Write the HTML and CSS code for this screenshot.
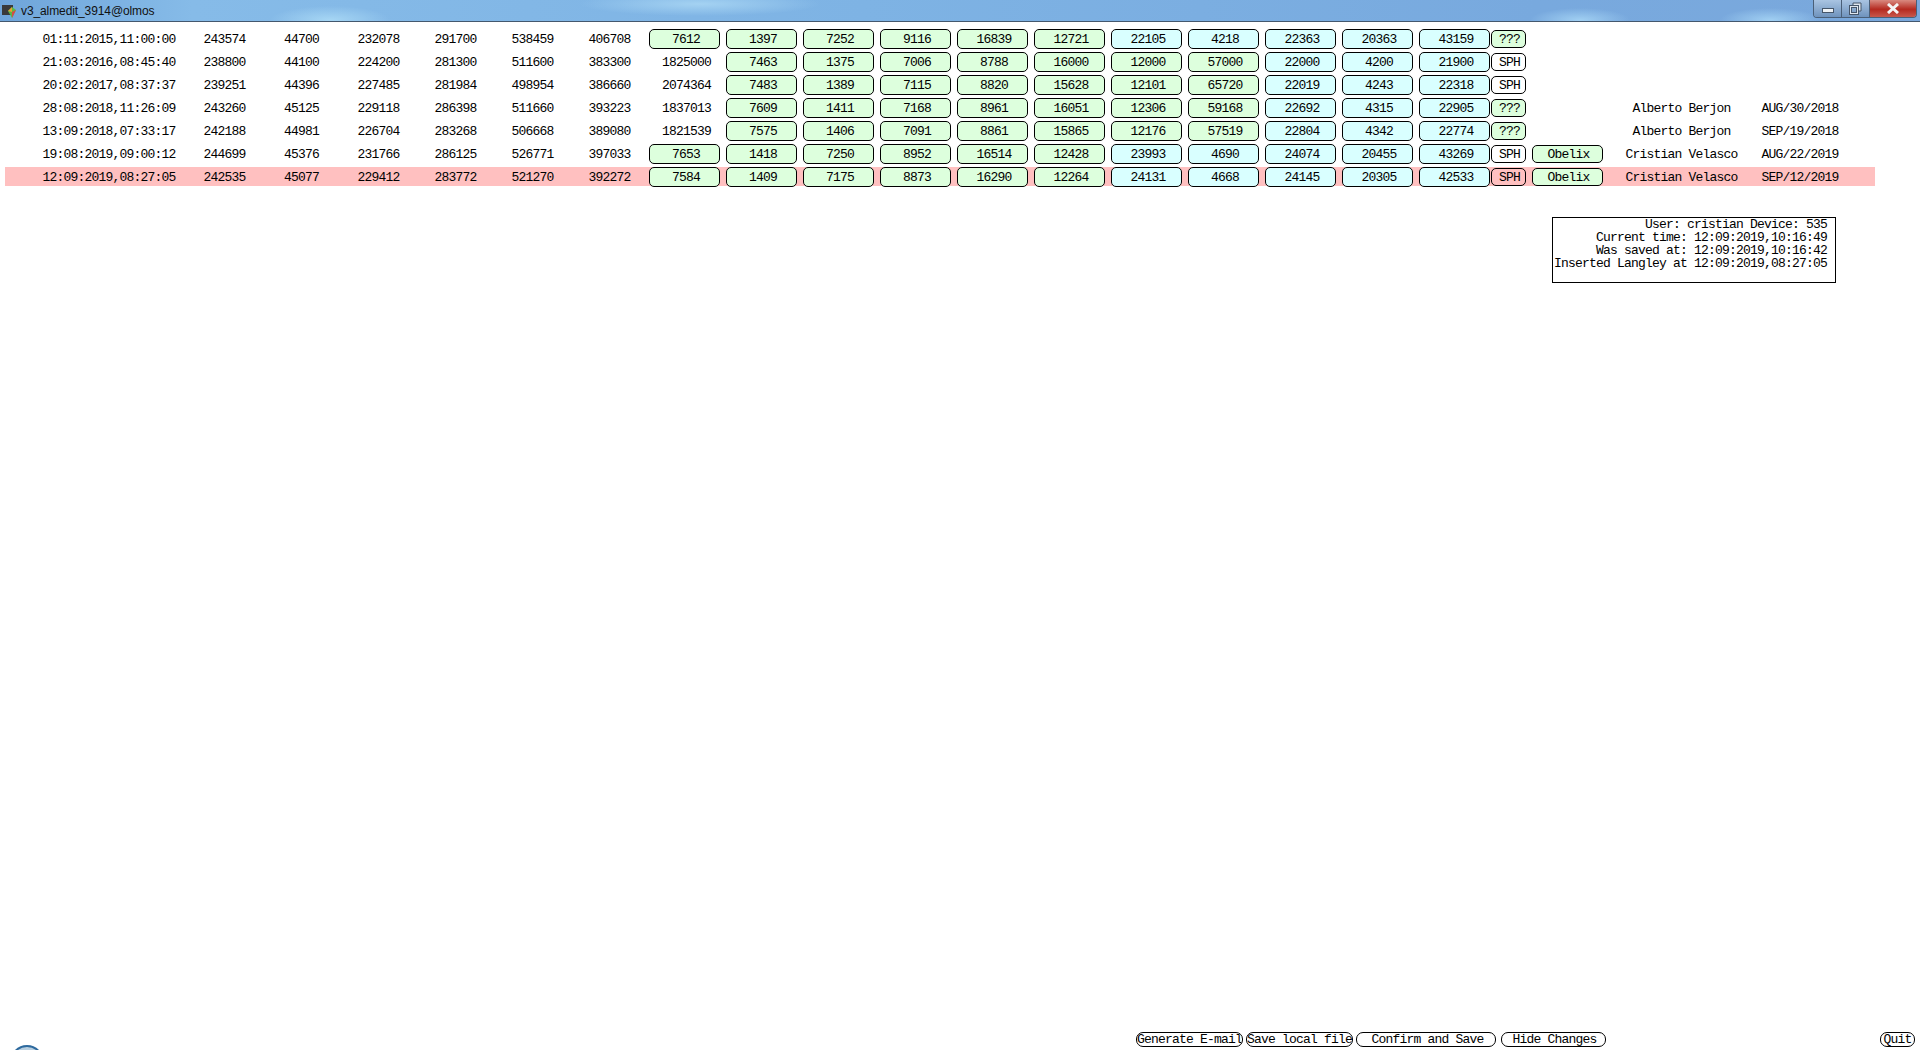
FILE: index.html
```html
<!DOCTYPE html>
<html lang="en">
<head>
    <meta charset="UTF-8">
    <title>v3_almedit_3914@olmos</title>
    <link rel="stylesheet" href="styles.css">
</head>
<body>
    <div class="titlebar">
        <svg class="app-icon" width="16" height="16" viewBox="0 0 16 16">
            <rect x="1" y="2" width="11" height="10" fill="#3a3a3a"/>
            <path d="M7 8 L11 4 L15 7 L11 15 Z" fill="#58b848"/>
            <path d="M7 8 L11 4 L11 9 Z" fill="#e8a030"/>
            <path d="M11 9 L15 7 L11 15 Z" fill="#d84848"/>
        </svg>
        <span class="title-text">v3_almedit_3914@olmos</span>
        <div class="win-buttons">
            <div class="win-btn win-min"><span class="min-glyph"></span></div>
            <div class="win-btn win-max">
                <svg width="13" height="13" viewBox="0 0 13 13">
                    <path d="M4 1 H12 V9 H9 V4 H4 Z" fill="#dfe6ee" stroke="#46566a"/>
                    <rect x="1.5" y="4.5" width="7" height="7" fill="none" stroke="#46566a" stroke-width="3"/>
                    <rect x="1.5" y="4.5" width="7" height="7" fill="none" stroke="#dfe6ee"/>
                </svg>
            </div>
            <div class="win-btn win-close">
                <svg width="14" height="11" viewBox="0 0 14 11"><path d="M2 1 L12 10 M12 1 L2 10" stroke="#f4f4f4" stroke-width="3"/></svg>
            </div>
        </div>
    </div>

    <div class="table">
        <div class="row">
            <div class="date">01:11:2015,11:00:00</div>
            <div class="cell">243574</div><div class="cell">44700</div><div class="cell">232078</div><div class="cell">291700</div><div class="cell">538459</div><div class="cell">406708</div>
            <div class="cell"><div class="btn green">7612</div></div><div class="cell"><div class="btn green">1397</div></div><div class="cell"><div class="btn green">7252</div></div><div class="cell"><div class="btn green">9116</div></div><div class="cell"><div class="btn green">16839</div></div><div class="cell"><div class="btn green">12721</div></div>
            <div class="cell"><div class="btn cyan">22105</div></div><div class="cell"><div class="btn cyan">4218</div></div><div class="cell"><div class="btn cyan">22363</div></div><div class="cell"><div class="btn cyan">20363</div></div><div class="cell"><div class="btn cyan">43159</div></div>
            <div class="tag green">???</div>
        </div>
        <div class="row">
            <div class="date">21:03:2016,08:45:40</div>
            <div class="cell">238800</div><div class="cell">44100</div><div class="cell">224200</div><div class="cell">281300</div><div class="cell">511600</div><div class="cell">383300</div>
            <div class="cell">1825000</div>
            <div class="cell"><div class="btn green">7463</div></div><div class="cell"><div class="btn green">1375</div></div><div class="cell"><div class="btn green">7006</div></div><div class="cell"><div class="btn green">8788</div></div><div class="cell"><div class="btn green">16000</div></div><div class="cell"><div class="btn green">12000</div></div><div class="cell"><div class="btn green">57000</div></div>
            <div class="cell"><div class="btn cyan">22000</div></div><div class="cell"><div class="btn cyan">4200</div></div><div class="cell"><div class="btn cyan">21900</div></div>
            <div class="tag">SPH</div>
        </div>
        <div class="row">
            <div class="date">20:02:2017,08:37:37</div>
            <div class="cell">239251</div><div class="cell">44396</div><div class="cell">227485</div><div class="cell">281984</div><div class="cell">498954</div><div class="cell">386660</div>
            <div class="cell">2074364</div>
            <div class="cell"><div class="btn green">7483</div></div><div class="cell"><div class="btn green">1389</div></div><div class="cell"><div class="btn green">7115</div></div><div class="cell"><div class="btn green">8820</div></div><div class="cell"><div class="btn green">15628</div></div><div class="cell"><div class="btn green">12101</div></div><div class="cell"><div class="btn green">65720</div></div>
            <div class="cell"><div class="btn cyan">22019</div></div><div class="cell"><div class="btn cyan">4243</div></div><div class="cell"><div class="btn cyan">22318</div></div>
            <div class="tag">SPH</div>
        </div>
        <div class="row">
            <div class="date">28:08:2018,11:26:09</div>
            <div class="cell">243260</div><div class="cell">45125</div><div class="cell">229118</div><div class="cell">286398</div><div class="cell">511660</div><div class="cell">393223</div>
            <div class="cell">1837013</div>
            <div class="cell"><div class="btn green">7609</div></div><div class="cell"><div class="btn green">1411</div></div><div class="cell"><div class="btn green">7168</div></div><div class="cell"><div class="btn green">8961</div></div><div class="cell"><div class="btn green">16051</div></div><div class="cell"><div class="btn green">12306</div></div><div class="cell"><div class="btn green">59168</div></div>
            <div class="cell"><div class="btn cyan">22692</div></div><div class="cell"><div class="btn cyan">4315</div></div><div class="cell"><div class="btn cyan">22905</div></div>
            <div class="tag green">???</div>
            <div class="tag-wide blank"></div>
            <div class="name">Alberto Berjon</div>
            <div class="when">AUG/30/2018</div>
        </div>
        <div class="row">
            <div class="date">13:09:2018,07:33:17</div>
            <div class="cell">242188</div><div class="cell">44981</div><div class="cell">226704</div><div class="cell">283268</div><div class="cell">506668</div><div class="cell">389080</div>
            <div class="cell">1821539</div>
            <div class="cell"><div class="btn green">7575</div></div><div class="cell"><div class="btn green">1406</div></div><div class="cell"><div class="btn green">7091</div></div><div class="cell"><div class="btn green">8861</div></div><div class="cell"><div class="btn green">15865</div></div><div class="cell"><div class="btn green">12176</div></div><div class="cell"><div class="btn green">57519</div></div>
            <div class="cell"><div class="btn cyan">22804</div></div><div class="cell"><div class="btn cyan">4342</div></div><div class="cell"><div class="btn cyan">22774</div></div>
            <div class="tag green">???</div>
            <div class="tag-wide blank"></div>
            <div class="name">Alberto Berjon</div>
            <div class="when">SEP/19/2018</div>
        </div>
        <div class="row">
            <div class="date">19:08:2019,09:00:12</div>
            <div class="cell">244699</div><div class="cell">45376</div><div class="cell">231766</div><div class="cell">286125</div><div class="cell">526771</div><div class="cell">397033</div>
            <div class="cell"><div class="btn green">7653</div></div><div class="cell"><div class="btn green">1418</div></div><div class="cell"><div class="btn green">7250</div></div><div class="cell"><div class="btn green">8952</div></div><div class="cell"><div class="btn green">16514</div></div><div class="cell"><div class="btn green">12428</div></div>
            <div class="cell"><div class="btn cyan">23993</div></div><div class="cell"><div class="btn cyan">4690</div></div><div class="cell"><div class="btn cyan">24074</div></div><div class="cell"><div class="btn cyan">20455</div></div><div class="cell"><div class="btn cyan">43269</div></div>
            <div class="tag">SPH</div>
            <div class="tag-wide green">Obelix</div>
            <div class="name">Cristian Velasco</div>
            <div class="when">AUG/22/2019</div>
        </div>
        <div class="row current">
            <div class="date">12:09:2019,08:27:05</div>
            <div class="cell">242535</div><div class="cell">45077</div><div class="cell">229412</div><div class="cell">283772</div><div class="cell">521270</div><div class="cell">392272</div>
            <div class="cell"><div class="btn green">7584</div></div><div class="cell"><div class="btn green">1409</div></div><div class="cell"><div class="btn green">7175</div></div><div class="cell"><div class="btn green">8873</div></div><div class="cell"><div class="btn green">16290</div></div><div class="cell"><div class="btn green">12264</div></div>
            <div class="cell"><div class="btn cyan">24131</div></div><div class="cell"><div class="btn cyan">4668</div></div><div class="cell"><div class="btn cyan">24145</div></div><div class="cell"><div class="btn cyan">20305</div></div><div class="cell"><div class="btn cyan">42533</div></div>
            <div class="tag pink">SPH</div>
            <div class="tag-wide green">Obelix</div>
            <div class="name">Cristian Velasco</div>
            <div class="when">SEP/12/2019</div>
        </div>
    </div>

    <div class="info-wrap">
        <div class="info">
            <div>User: cristian Device: 535</div>
            <div>Current time: 12:09:2019,10:16:49</div>
            <div>Was saved at: 12:09:2019,10:16:42</div>
            <div>Inserted Langley at 12:09:2019,08:27:05</div>
        </div>
    </div>

    <div class="footer">
        <div class="action w-107">Generate E-mail</div>
        <div class="action w-107">Save local file</div>
        <div class="action w-140">Confirm and Save</div>
        <div class="action w-105">Hide Changes</div>
        <div class="action quit">Quit</div>
    </div>

    <div class="start-orb"></div>
</body>
</html>
```

FILE: styles.css
```css
html, body {
    margin: 0;
    padding: 0;
}
body {
    height: 1050px;
    overflow: hidden;
    position: relative;
    background-color: #fff;
    color: #000;
    font-family: "Liberation Mono", "DejaVu Sans Mono", monospace;
    font-size: 13px;
    letter-spacing: -0.8px;
}

/* window title */
.titlebar {
    height: 21px;
    display: flex;
    align-items: center;
    background:
        radial-gradient(ellipse 60px 14px at 330px 20px, #a6d6f4, transparent),
        radial-gradient(ellipse 50px 12px at 1580px 20px, #a0cff2, transparent),
        radial-gradient(ellipse 50px 12px at 1770px 20px, #a0cff2, transparent),
        radial-gradient(ellipse 120px 12px at 700px 4px, #a4d2f2, transparent),
        linear-gradient(90deg, #6fa5da 0%, #86bbe8 10%, #7eb3e4 45%, #78a9de 80%, #7aa8dc 100%);
    border-bottom: 1px solid #44586e;
    font-family: "Liberation Sans", sans-serif;
    font-size: 12px;
    letter-spacing: -0.1px;
    position: relative;
}
.app-icon {
    margin-left: 1px;
}
.title-text {
    margin-left: 4px;
    color: #111;
}
.win-buttons {
    position: absolute;
    top: 0;
    right: 3px;
    display: flex;
    height: 17px;
    border: 1px solid #4a5f78;
    border-top: none;
    border-radius: 0 0 4px 4px;
    overflow: hidden;
}
.win-btn {
    display: flex;
    align-items: center;
    justify-content: center;
}
.win-min, .win-max {
    width: 27px;
    background: linear-gradient(#a9c4e2, #6f93bd);
    border-right: 1px solid #4a5f78;
}
.win-close {
    width: 46px;
    background: linear-gradient(#d98a80 0%, #b52a20 55%, #c8584c 100%);
}
.min-glyph {
    width: 10px;
    height: 3px;
    margin-top: 4px;
    background-color: #eef2f6;
    border: 1px solid #46566a;
}

/* table */
.table {
    padding-top: 7px;
    display: flex;
    flex-direction: column;
    gap: 4px;
    align-items: flex-start;
}
.row {
    width: 1870px;
    height: 19px;
    margin-left: 5px;
    display: flex;
    align-items: center;
    white-space: nowrap;
}
.row.current {
    background-color: #ffc0c0;
}
.date {
    width: 154px;
    margin-left: 27px;
    padding-top: 2px;
    text-align: center;
}
.cell {
    width: 77px;
    padding-top: 2px;
    text-align: center;
    flex-shrink: 0;
}
.btn {
    width: 66px;
    height: 18px;
    line-height: 20px;
    margin-top: -2px;
    margin-left: 1px;
    padding-left: 3px;
    border: 1px solid #000;
    border-radius: 5px;
    text-align: center;
}
.tag {
    width: 31px;
    height: 16px;
    line-height: 18px;
    margin-left: -4px;
    padding-left: 2px;
    background-color: #fff;
    border: 1px solid #000;
    border-radius: 5px;
    text-align: center;
    flex-shrink: 0;
}
.tag-wide {
    width: 67px;
    height: 16px;
    line-height: 18px;
    margin-left: 6px;
    padding-left: 2px;
    border: 1px solid #000;
    border-radius: 5px;
    text-align: center;
    flex-shrink: 0;
}
.tag-wide.blank {
    visibility: hidden;
}
.green {
    background-color: #ddffdd;
}
.tag.green {
    background-color: #ddffdd;
}
.cyan {
    background-color: #d9ffff;
}
.tag.pink {
    background-color: #ffc0c0;
}
.name {
    width: 157px;
    padding-top: 2px;
    text-align: center;
    flex-shrink: 0;
}
.when {
    width: 80px;
    padding-top: 2px;
    text-align: center;
    flex-shrink: 0;
}

/* info box */
.info-wrap {
    display: flex;
    justify-content: flex-end;
    padding: 31px 84px 0 0;
}
.info {
    width: 274px;
    height: 64px;
    padding-right: 8px;
    border: 1px solid #000;
    text-align: right;
    line-height: 13px;
    white-space: nowrap;
}

/* bottom buttons */
.footer {
    position: absolute;
    left: 1136px;
    right: 5px;
    top: 1032px;
    display: flex;
    white-space: nowrap;
}
.action {
    height: 13px;
    line-height: 13px;
    border: 1px solid #000;
    border-radius: 7px;
    text-align: center;
    flex-shrink: 0;
    overflow: hidden;
}
.w-107 {
    width: 105px;
    margin-right: 3px;
}
.w-140 {
    width: 135px;
    padding-left: 3px;
    margin-right: 5px;
}
.w-105 {
    width: 101px;
    padding-left: 2px;
}
.quit {
    width: 33px;
    margin-left: auto;
}

.start-orb {
    position: absolute;
    left: 10px;
    top: 1045px;
    width: 34px;
    height: 34px;
    box-sizing: border-box;
    border: 2px solid #2e6a9e;
    border-radius: 50%;
    background-color: #b8cfe0;
}
```
